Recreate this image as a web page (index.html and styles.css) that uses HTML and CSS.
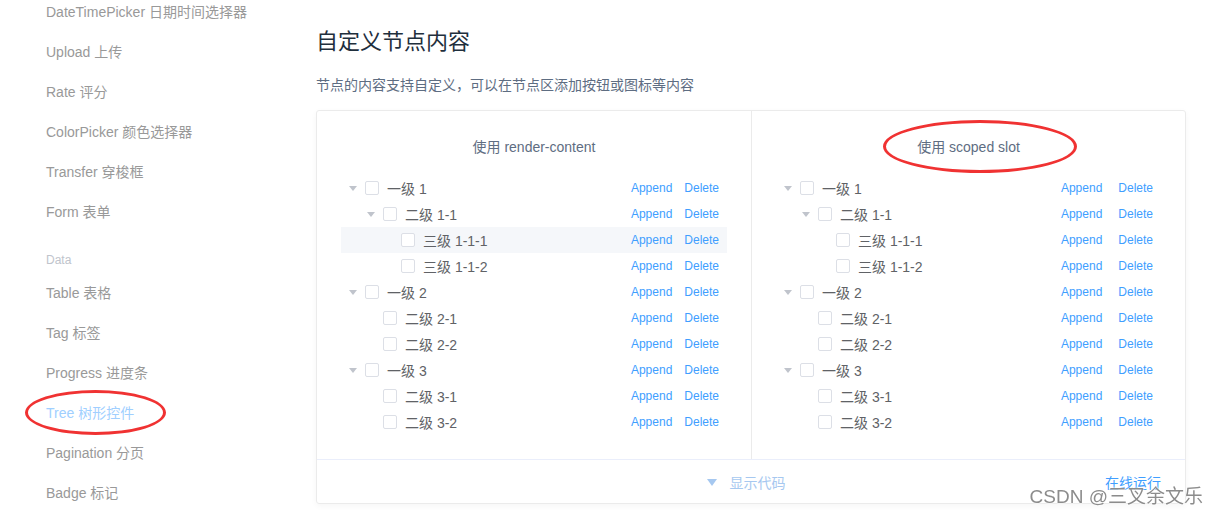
FILE: index.html
```html
<!DOCTYPE html>
<html lang="zh-CN">
<head>
    <meta charset="UTF-8">
    <title>Tree 树形控件</title>
    <link rel="stylesheet" href="styles.css">
</head>
<body>
    <div class="page">
        <aside class="sidebar">
            <ul class="nav">
                <li class="nav-item">DateTimePicker 日期时间选择器</li>
                <li class="nav-item">Upload 上传</li>
                <li class="nav-item">Rate 评分</li>
                <li class="nav-item">ColorPicker 颜色选择器</li>
                <li class="nav-item">Transfer 穿梭框</li>
                <li class="nav-item">Form 表单</li>
                <li class="nav-group">Data</li>
                <li class="nav-item">Table 表格</li>
                <li class="nav-item">Tag 标签</li>
                <li class="nav-item">Progress 进度条</li>
                <li class="nav-item active">Tree 树形控件<span class="mark mark-nav"></span></li>
                <li class="nav-item">Pagination 分页</li>
                <li class="nav-item">Badge 标记</li>
            </ul>
        </aside>

        <main class="content">
            <h3 class="title">自定义节点内容</h3>
            <p class="desc">节点的内容支持自定义，可以在节点区添加按钮或图标等内容</p>

            <div class="demo">
                <div class="demo-cols">
                    <div class="block">
                        <p class="block-title">使用 render-content</p>
                        <div class="tree">
                            <div class="node"><i class="caret"></i><span class="check"></span><span class="label">一级 1</span><span class="ops"><a>Append</a><a>Delete</a></span></div>
                            <div class="node lv2"><i class="caret"></i><span class="check"></span><span class="label">二级 1-1</span><span class="ops"><a>Append</a><a>Delete</a></span></div>
                            <div class="node lv3 current"><i class="caret leaf"></i><span class="check"></span><span class="label">三级 1-1-1</span><span class="ops"><a>Append</a><a>Delete</a></span></div>
                            <div class="node lv3"><i class="caret leaf"></i><span class="check"></span><span class="label">三级 1-1-2</span><span class="ops"><a>Append</a><a>Delete</a></span></div>
                            <div class="node"><i class="caret"></i><span class="check"></span><span class="label">一级 2</span><span class="ops"><a>Append</a><a>Delete</a></span></div>
                            <div class="node lv2"><i class="caret leaf"></i><span class="check"></span><span class="label">二级 2-1</span><span class="ops"><a>Append</a><a>Delete</a></span></div>
                            <div class="node lv2"><i class="caret leaf"></i><span class="check"></span><span class="label">二级 2-2</span><span class="ops"><a>Append</a><a>Delete</a></span></div>
                            <div class="node"><i class="caret"></i><span class="check"></span><span class="label">一级 3</span><span class="ops"><a>Append</a><a>Delete</a></span></div>
                            <div class="node lv2"><i class="caret leaf"></i><span class="check"></span><span class="label">二级 3-1</span><span class="ops"><a>Append</a><a>Delete</a></span></div>
                            <div class="node lv2"><i class="caret leaf"></i><span class="check"></span><span class="label">二级 3-2</span><span class="ops"><a>Append</a><a>Delete</a></span></div>
                        </div>
                    </div>
                    <div class="block">
                        <p class="block-title"><span class="marked">使用 scoped slot<span class="mark mark-slot"></span></span></p>
                        <div class="tree slot">
                            <div class="node"><i class="caret"></i><span class="check"></span><span class="label">一级 1</span><span class="ops"><a>Append</a><a>Delete</a></span></div>
                            <div class="node lv2"><i class="caret"></i><span class="check"></span><span class="label">二级 1-1</span><span class="ops"><a>Append</a><a>Delete</a></span></div>
                            <div class="node lv3"><i class="caret leaf"></i><span class="check"></span><span class="label">三级 1-1-1</span><span class="ops"><a>Append</a><a>Delete</a></span></div>
                            <div class="node lv3"><i class="caret leaf"></i><span class="check"></span><span class="label">三级 1-1-2</span><span class="ops"><a>Append</a><a>Delete</a></span></div>
                            <div class="node"><i class="caret"></i><span class="check"></span><span class="label">一级 2</span><span class="ops"><a>Append</a><a>Delete</a></span></div>
                            <div class="node lv2"><i class="caret leaf"></i><span class="check"></span><span class="label">二级 2-1</span><span class="ops"><a>Append</a><a>Delete</a></span></div>
                            <div class="node lv2"><i class="caret leaf"></i><span class="check"></span><span class="label">二级 2-2</span><span class="ops"><a>Append</a><a>Delete</a></span></div>
                            <div class="node"><i class="caret"></i><span class="check"></span><span class="label">一级 3</span><span class="ops"><a>Append</a><a>Delete</a></span></div>
                            <div class="node lv2"><i class="caret leaf"></i><span class="check"></span><span class="label">二级 3-1</span><span class="ops"><a>Append</a><a>Delete</a></span></div>
                            <div class="node lv2"><i class="caret leaf"></i><span class="check"></span><span class="label">二级 3-2</span><span class="ops"><a>Append</a><a>Delete</a></span></div>
                        </div>
                    </div>
                </div>
                <div class="demo-control">
                    <span class="show-code"><i class="down"></i>显示代码</span>
                    <a class="run-online">在线运行</a>
                </div>
            </div>
        </main>
    </div>
    <div class="watermark">CSDN @三叉余文乐</div>
</body>
</html>
```

FILE: styles.css
```css
/* General styles */
body {
    margin: 0;
    font-family: "Liberation Sans", "Noto Sans CJK SC", sans-serif;
    background: #fff;
    color: #606266;
    overflow: hidden;
}
.page {
    display: flex;
    height: 515px;
}

/* Sidebar */
.sidebar {
    width: 316px;
    flex-shrink: 0;
}
.nav {
    list-style: none;
    margin: -8px 0 0;
    padding: 0 0 0 46px;
}
.nav-item {
    position: relative;
    font-size: 14px;
    line-height: 40px;
    height: 40px;
    color: #999;
}
.nav-item.active {
    color: #a0cfff;
}
.nav-group {
    font-size: 12px;
    line-height: 20px;
    padding: 18px 0 3px;
    color: #c0c4cc;
}

/* Red annotation marks */
.mark {
    position: absolute;
    border: 3px solid #f03232;
    border-radius: 50%;
    box-sizing: border-box;
}
.mark-nav {
    left: -21px;
    top: -3px;
    width: 141px;
    height: 45px;
}
.mark-slot {
    left: calc(50% - 86px);
    top: -17px;
    width: 194px;
    height: 53px;
}

/* Content */
.content {
    width: 870px;
}
.title {
    margin: 0;
    padding-top: 27px;
    font-size: 22px;
    line-height: 30px;
    font-weight: normal;
    color: #1f2f3d;
}
.desc {
    margin: 17px 0 14px;
    font-size: 14px;
    line-height: 22px;
    color: #5e6d82;
}

.demo {
    border: 1px solid #ebebeb;
    border-radius: 3px;
    box-shadow: 0 2px 6px rgba(0, 0, 0, 0.04);
}
.demo-cols {
    display: grid;
    grid-template-columns: 434px 1fr;
}
.block {
    padding: 26px 24px 24px;
}
.block + .block {
    border-left: 1px solid #ebebeb;
}
.block-title {
    margin: 0 0 18px;
    text-align: center;
    font-size: 14px;
    line-height: 20px;
    color: #5e6d82;
}
.marked {
    position: relative;
    display: inline-block;
}

/* Tree */
.node {
    display: flex;
    align-items: center;
    height: 26px;
    padding-right: 8px;
    font-size: 14px;
}
.node.lv2 {
    padding-left: 18px;
}
.node.lv3 {
    padding-left: 36px;
}
.node.current {
    background: #f5f7fa;
}
.caret {
    width: 24px;
    height: 26px;
    flex-shrink: 0;
    position: relative;
}
.caret::after {
    content: "";
    position: absolute;
    left: 8px;
    top: 11px;
    border-style: solid;
    border-width: 5px 4px 0;
    border-color: #c0c4cc transparent transparent;
}
.caret.leaf::after {
    display: none;
}
.check {
    width: 14px;
    height: 14px;
    box-sizing: border-box;
    border: 1px solid #dcdfe6;
    border-radius: 2px;
    background: #fff;
    margin-right: 8px;
    flex-shrink: 0;
}
.label {
    flex: 1;
    color: #606266;
}
.ops {
    font-size: 12px;
    color: #409eff;
}
.ops a + a {
    margin-left: 12px;
}
.slot .ops a + a {
    margin-left: 16px;
}

/* Footer control */
.demo-control {
    position: relative;
    height: 43px;
    border-top: 1px solid #eaeefb;
    display: flex;
    align-items: center;
    justify-content: center;
    font-size: 14px;
}
.show-code {
    color: #a6c8f0;
    margin-right: 10px;
}
.down {
    display: inline-block;
    vertical-align: middle;
    margin: -3px 13px 0 0;
    border-style: solid;
    border-width: 7px 5px 0;
    border-color: #a6c8f0 transparent transparent;
}
.run-online {
    position: absolute;
    right: 24px;
    top: 12px;
    color: #409eff;
}

.watermark {
    position: fixed;
    right: 15px;
    bottom: 7px;
    font-size: 19px;
    color: #8c8c8c;
    text-shadow: 0 0 2px #fff, 0 0 2px #fff;
}
```
